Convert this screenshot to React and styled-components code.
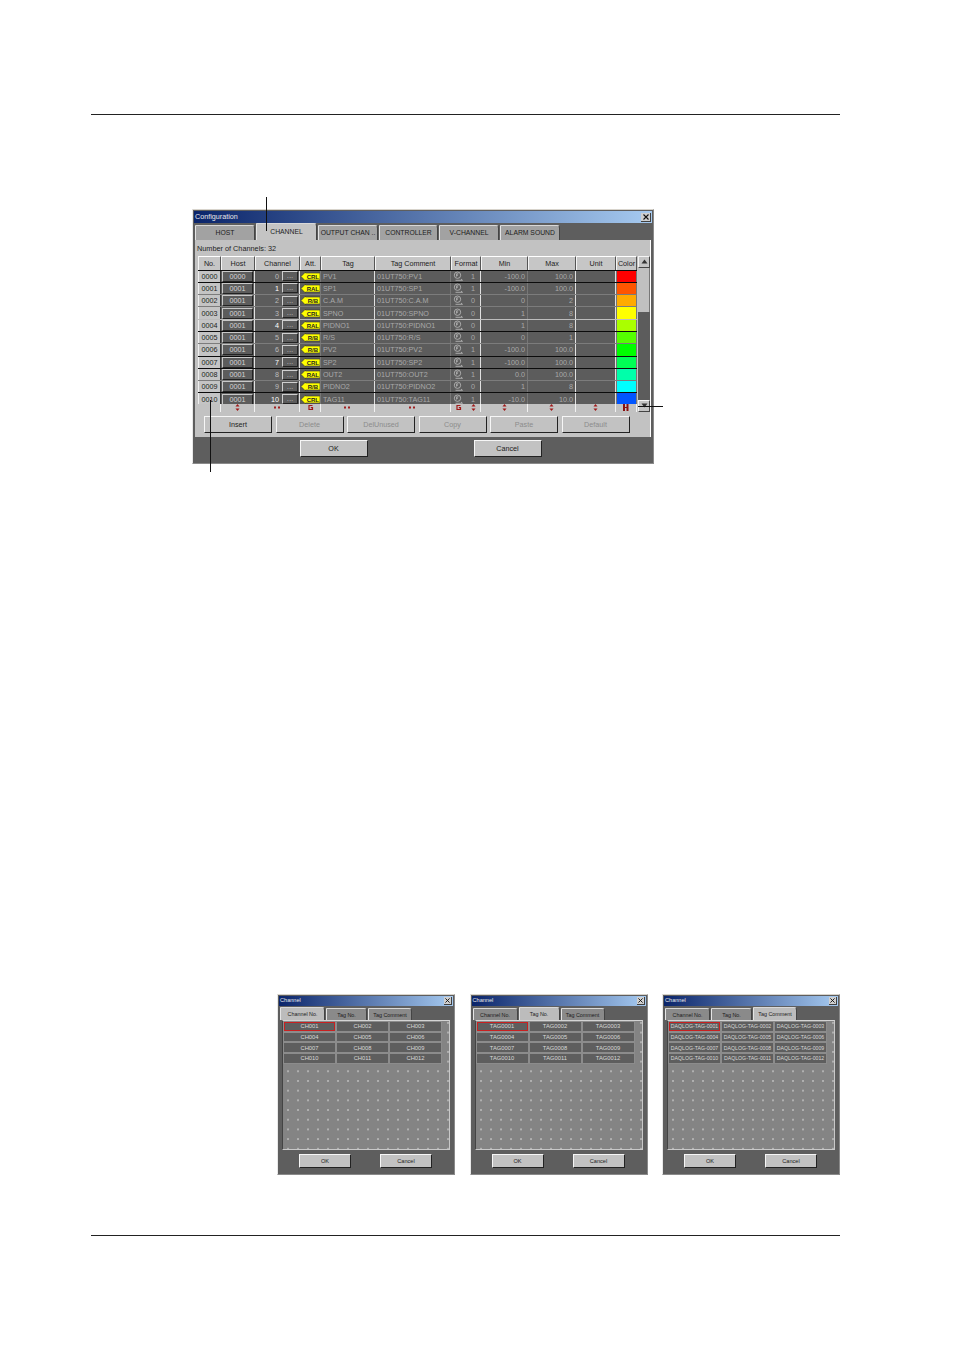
import styled, { createGlobalStyle } from 'styled-components'

const GlobalStyle = createGlobalStyle`
  html, body { margin: 0; padding: 0; background: #fff; }
  body { font-family: "Liberation Sans", Arial, sans-serif; }
`

const COLUMNS = '23px 34px 45px 21px 54px 76px 30px 47px 48px 40px 21px'

const Page = styled.div`
  position: relative;
  width: 954px;
  height: 1350px;
  padding-top: 114px;
  box-sizing: border-box;
  overflow: hidden;
`

const Rule = styled.div`
  width: 749px;
  height: 1px;
  margin-left: 91px;
  background: #222;
`

const FooterRule = styled(Rule)`
  margin-top: 60px;
`

const Callout = styled.div`
  position: absolute;
  left: ${({ $x }) => $x}px;
  top: ${({ $y }) => $y}px;
  width: ${({ $w }) => $w}px;
  height: ${({ $h }) => $h}px;
  background: #111;
  z-index: 5;
`

/* ── Window chrome ── */
const ConfigWindow = styled.div`
  width: 462px;
  height: 255px;
  margin: 94px 0 0 192px;
  box-sizing: border-box;
  padding: 1px;
  background: #5e5e5e;
  border: 1px solid;
  border-color: #d8d4cc #8a8a8a #8a8a8a #e8e8e8;
  display: flex;
  flex-direction: column;
`

const TitleBar = styled.div`
  flex: none;
  height: ${({ $small }) => ($small ? 10 : 12)}px;
  display: flex;
  align-items: center;
  justify-content: space-between;
  padding: 0 1px;
  background: linear-gradient(90deg, #0a246a, #a6caf0);
  color: #e8e8e8;
  font-size: ${({ $small }) => ($small ? 5.6 : 7.2)}px;
  line-height: 1;
`

const CloseBox = styled.span`
  width: ${({ $small }) => ($small ? 8 : 10)}px;
  height: ${({ $small }) => ($small ? 8 : 9)}px;
  display: flex;
  align-items: center;
  justify-content: center;
  background: #d0d0d0;
  border-right: 1px solid #404040;
  border-bottom: 1px solid #404040;
  box-sizing: border-box;

  svg { display: block; }
`

const TabRow = styled.div`
  flex: none;
  display: flex;
  align-items: flex-end;
  gap: 1px;
  height: ${({ $small }) => ($small ? 14 : 17)}px;
  padding-left: 1px;
`

const inactiveTab = ({ $small }) => ($small ? '#8a8a8a' : '#a2a2a2')
const activeTab = ({ $small }) => ($small ? '#bcbcbc' : '#c4c4c4')

const Tab = styled.div`
  width: ${({ $w }) => $w}px;
  height: ${({ $active, $small }) => ($small ? ($active ? 13 : 12) : ($active ? 17 : 15))}px;
  box-sizing: border-box;
  display: flex;
  align-items: center;
  justify-content: center;
  padding-bottom: ${({ $small }) => ($small ? 0 : 2)}px;
  background: ${(p) => (p.$active ? activeTab(p) : inactiveTab(p))};
  border-top: 1px solid #d8d8d8;
  border-left: 1px solid #e4e4e4;
  border-right: 1px solid #444;
  border-top-right-radius: 3px;
  color: #1c1c1c;
  font-size: ${({ $small }) => ($small ? 5.4 : 6.8)}px;
  white-space: nowrap;
`

const Panel = styled.div`
  flex: none;
  height: 197px;
  margin: 0 1px;
  padding: 4px 0 0 3px;
  box-sizing: border-box;
  background: #c2c2c2;
  border-right: 1px solid #fff;
`

const CountLabel = styled.div`
  height: 11.5px;
  margin-left: -1px;
  font-size: 7.3px;
  line-height: 10px;
  color: #222;
`

const GridRow = styled.div`
  display: flex;
`

const Table = styled.div`
  width: 439px;
`

const HeaderRow = styled.div`
  display: grid;
  grid-template-columns: ${COLUMNS};
  height: 14px;
`

const HeaderCell = styled.div`
  display: flex;
  align-items: center;
  justify-content: center;
  box-sizing: border-box;
  background: #c6c6c6;
  border-top: 1px solid #fff;
  border-left: 1px solid #f4f4f4;
  border-right: 1px solid #555;
  font-size: 7.2px;
  color: #1c1c1c;
`

const Body = styled.div`
  height: 134px;
  overflow: hidden;
`

const SEPARATORS = { dark: '#0c0c0c', mid: '#7c7c7c', light: '#bcbcbc' }

const Row = styled.div`
  display: grid;
  grid-template-columns: ${COLUMNS};
  height: 12.3px;
  box-sizing: border-box;
  background: #5c5c5c;
  border-top: 1px solid ${({ $sep }) => SEPARATORS[$sep]};
`

const Cell = styled.div`
  display: flex;
  align-items: center;
  justify-content: ${({ $align }) => $align || 'flex-start'};
  gap: 3px;
  min-width: 0;
  padding: 0 ${({ $pad }) => $pad ?? 2}px;
  box-sizing: border-box;
  border-right: 1px solid ${({ $strong }) => ($strong ? '#e0e0e0' : '#777')};
  font-size: 7.2px;
  color: #a9a9a9;
  white-space: nowrap;
  overflow: hidden;
`

const NumberCell = styled(Cell)`
  justify-content: center;
  background: #c4c4c4;
  color: #222;
  border-left: 1px solid #eee;
  border-right: 1px solid #333;
`

const HostButton = styled.div`
  flex: 1;
  height: 9px;
  display: flex;
  align-items: center;
  justify-content: center;
  border: 1px solid #c8c8c8;
  border-right-color: #222;
  border-bottom-color: #222;
  color: #d4d4d4;
  font-size: 7.2px;
`

const ChannelNumber = styled.span`
  color: ${({ $bright }) => ($bright ? '#fff' : '#bdbdbd')};
`

const MoreButton = styled.span`
  width: 16px;
  height: 10px;
  flex: none;
  display: flex;
  align-items: center;
  justify-content: center;
  border: 1px solid #cfcfcf;
  border-right-color: #222;
  border-bottom-color: #222;
  box-sizing: border-box;
  color: #b8b8b8;
  font-size: 8px;
  line-height: 8px;
`

const FormatValue = styled.span`
  margin-right: 3px;
`

const Swatch = styled.div`
  background: ${({ $color }) => $color};
  border-left: 1px solid #777;
  border-right: 1px solid #777;
`

const SortStrip = styled.div`
  display: grid;
  grid-template-columns: ${COLUMNS};
  height: 8px;
`

const SortCell = styled.div`
  display: flex;
  align-items: center;
  justify-content: ${({ $spread }) => ($spread ? 'space-around' : 'center')};
  background: #c2c2c2;
  border-right: 1px solid #f2f2f2;
  box-sizing: border-box;
`

const ScrollBar = styled.div`
  width: 12px;
  height: 156px;
  margin-left: 1px;
  display: flex;
  flex-direction: column;
  background: #5c5c5c;
`

const ScrollArrow = styled.div`
  height: 12px;
  flex: none;
  display: flex;
  align-items: center;
  justify-content: center;
  background: #c4c4c4;
  box-sizing: border-box;
  border: 1px solid;
  border-color: #f4f4f4 #444 #444 #f4f4f4;
`

const ScrollThumb = styled.div`
  height: 44px;
  flex: none;
  background: #c0c0c0;
  border-right: 1px solid #777;
  box-sizing: border-box;
`

const ScrollTrack = styled.div`
  flex: 1;
`

const ActionRow = styled.div`
  display: flex;
  gap: 3.5px;
  margin: 4px 0 0 6px;
`

const Button = styled.div`
  width: ${({ $w }) => $w}px;
  height: ${({ $h }) => $h}px;
  display: flex;
  align-items: center;
  justify-content: center;
  box-sizing: border-box;
  background: #c2c2c2;
  border: 1px solid;
  border-color: #f6f6f6 #222 #222 #f6f6f6;
  color: ${({ $disabled }) => ($disabled ? '#8c8c8c' : '#1c1c1c')};
  font-size: ${({ $small }) => ($small ? 5.6 : 7.2)}px;
`

const FooterButtons = styled.div`
  flex: 1;
  display: flex;
  align-items: center;
  gap: 106px;
  padding: 0 0 3px 105.5px;
`

/* ── Channel dialogs ── */
const DialogRow = styled.div`
  display: flex;
  gap: 14.5px;
  margin: 530px 0 0 277px;
`

const Dialog = styled.div`
  width: 178px;
  height: 181px;
  box-sizing: border-box;
  padding: 1px;
  display: flex;
  flex-direction: column;
  background: #5e5e5e;
  border: 1px solid;
  border-color: #d8d4cc #8a8a8a #8a8a8a #e8e8e8;
`

const DialogPanel = styled.div`
  flex: none;
  height: 130px;
  margin: 0 3px;
  box-sizing: border-box;
  border: 1px solid;
  border-color: #d4d4d4 #c8c8c8 #c8c8c8 #444;
  background-color: #848484;
  background-image: radial-gradient(circle, #c0c0c0 0.6px, transparent 0.95px);
  background-size: 10px 9.7px;
  background-position: 0 -3px;
`

const ChannelGrid = styled.div`
  width: 159px;
  display: grid;
  grid-template-columns: repeat(3, 1fr);
  grid-auto-rows: 10.7px;
  background: #5e5e5e;
`

const ChannelCell = styled.div`
  position: relative;
  display: flex;
  align-items: center;
  justify-content: center;
  box-sizing: border-box;
  border: 1px solid #8c8c8c;
  color: #d8d8d8;
  font-size: ${({ $tight }) => ($tight ? 5.2 : 5.8)}px;
  white-space: nowrap;
  overflow: hidden;

  ${({ $selected }) => $selected && `
    &::after {
      content: '';
      position: absolute;
      inset: 0;
      border: 1px solid #c82020;
    }
  `}
`

const DialogButtons = styled.div`
  flex: 1;
  display: flex;
  align-items: center;
  gap: 29px;
  padding: 0 0 2px 20px;
`

/* ── Small drawings ── */
const AttTag = ({ label }) => (
  <svg width="19" height="9" viewBox="0 0 19 9">
    <polygon points="0,4.5 4.5,0 4.5,1 19,1 19,8 4.5,8 4.5,9" fill="#ffff00" stroke="#333" strokeWidth="0.6" />
    <text x="11.8" y="7" textAnchor="middle" fontSize="6" fontWeight="700" fill="#222"
      fontFamily="Liberation Sans, sans-serif">{label}</text>
  </svg>
)

const FormatIcon = () => (
  <svg width="11" height="11" viewBox="0 0 11 11" fill="none" stroke="#bcbcbc" strokeWidth="0.8">
    <circle cx="4.5" cy="4.2" r="3.2" />
    <path d="M3.6 2.8v2.8M3.6 2.8h1.8M3.6 4.2h1.4" />
    <path d="M2.5 9.3h7M8 8l1.5 1.3" />
  </svg>
)

const SortGlyph = ({ kind }) => {
  if (kind === 'wide') {
    return (
      <svg width="7" height="5" viewBox="0 0 7 5" fill="#a02020">
        <rect x="0" y="1.5" width="2" height="2" />
        <rect x="4" y="1.5" width="2" height="2" />
      </svg>
    )
  }
  if (kind === 'badge') {
    return (
      <svg width="7" height="7" viewBox="0 0 7 7" fill="none" stroke="#a01818" strokeWidth="1.2">
        <path d="M5.5 1.5H2v4h3.5V3.6H3.8" />
      </svg>
    )
  }
  if (kind === 'bars') {
    return (
      <svg width="6" height="7" viewBox="0 0 6 7" fill="#8a0f0f">
        <rect x="0" y="0" width="2" height="7" />
        <rect x="3.5" y="0" width="2" height="7" />
        <rect x="0" y="3" width="5" height="1" />
      </svg>
    )
  }
  return (
    <svg width="5" height="7" viewBox="0 0 5 7" fill="#a01818">
      <polygon points="2.5,0 4.5,2.5 0.5,2.5" />
      <polygon points="2.5,7 4.5,4.5 0.5,4.5" />
    </svg>
  )
}

const CloseIcon = ({ size = 6 }) => (
  <svg width={size} height={size} viewBox="0 0 6 6" stroke="#111" strokeWidth="1.1">
    <path d="M0.5 0.5l5 5M5.5 0.5l-5 5" />
  </svg>
)

const Triangle = ({ down }) => (
  <svg width="7" height="5" viewBox="0 0 7 5" fill="#333">
    <polygon points={down ? '0.5,0.5 6.5,0.5 3.5,4.5' : '3.5,0.5 6.5,4.5 0.5,4.5'} />
  </svg>
)

/* ── Data ── */
const CONFIG_TABS = [
  { label: 'HOST', w: 60 },
  { label: 'CHANNEL', w: 61, active: true },
  { label: 'OUTPUT CHAN ..', w: 60 },
  { label: 'CONTROLLER', w: 59 },
  { label: 'V-CHANNEL', w: 60 },
  { label: 'ALARM SOUND', w: 60 },
]

const HEADERS = ['No.', 'Host', 'Channel', 'Att.', 'Tag', 'Tag Comment', 'Format', 'Min', 'Max', 'Unit', 'Color']

const ROWS = [
  { tag: 'PV1', att: 'CRL', fmt: 1, min: '-100.0', max: '100.0', color: '#ff0000', sep: 'dark' },
  { tag: 'SP1', att: 'RAL', fmt: 1, min: '-100.0', max: '100.0', color: '#ff5500', sep: 'dark' },
  { tag: 'C.A.M', att: 'R/B', fmt: 0, min: '0', max: '2', color: '#ffaa00', sep: 'mid' },
  { tag: 'SPNO', att: 'CRL', fmt: 0, min: '1', max: '8', color: '#ffff00', sep: 'mid' },
  { tag: 'PIDNO1', att: 'RAL', fmt: 0, min: '1', max: '8', color: '#aaff00', sep: 'light' },
  { tag: 'R/S', att: 'R/B', fmt: 0, min: '0', max: '1', color: '#55ff00', sep: 'dark' },
  { tag: 'PV2', att: 'R/B', fmt: 1, min: '-100.0', max: '100.0', color: '#00ff00', sep: 'mid' },
  { tag: 'SP2', att: 'CRL', fmt: 1, min: '-100.0', max: '100.0', color: '#00ff55', sep: 'dark' },
  { tag: 'OUT2', att: 'RAL', fmt: 1, min: '0.0', max: '100.0', color: '#00ffaa', sep: 'dark' },
  { tag: 'PIDNO2', att: 'R/B', fmt: 0, min: '1', max: '8', color: '#00ffff', sep: 'mid' },
  { tag: 'TAG11', att: 'CRL', fmt: 1, min: '-10.0', max: '10.0', color: '#0055ff', sep: 'dark' },
]

const ACTIONS = [
  { label: 'Insert' },
  { label: 'Delete', disabled: true },
  { label: 'DelUnused', disabled: true },
  { label: 'Copy', disabled: true },
  { label: 'Paste', disabled: true },
  { label: 'Default', disabled: true },
]

const SORT_GLYPHS = [[], ['arrow'], ['wide'], ['badge'], ['wide'], ['wide'], ['badge', 'arrow'], ['arrow'], ['arrow'], ['arrow'], ['bars']]

const DIALOG_TABS = [
  { label: 'Channel No.', w: 45 },
  { label: 'Tag No.', w: 41 },
  { label: 'Tag Comment', w: 44 },
]

const pad = (n, size) => String(n).padStart(size, '0')
const numbers = Array.from({ length: 12 }, (_, i) => i + 1)

const DIALOGS = [
  { active: 0, cells: numbers.map((n) => `CH${pad(n, 3)}`) },
  { active: 1, cells: numbers.map((n) => `TAG${pad(n, 4)}`) },
  { active: 2, tight: true, cells: numbers.map((n) => `DAQLOG-TAG-${pad(n, 4)}`) },
]

function ChannelDialog({ active, cells, tight }) {
  return (
    <Dialog>
      <TitleBar $small>
        Channel
        <CloseBox $small><CloseIcon size={5} /></CloseBox>
      </TitleBar>
      <TabRow $small>
        {DIALOG_TABS.map((tab, i) => (
          <Tab key={tab.label} $small $w={tab.w} $active={i === active}>{tab.label}</Tab>
        ))}
      </TabRow>
      <DialogPanel>
        <ChannelGrid>
          {cells.map((text, i) => (
            <ChannelCell key={text} $selected={i === 0} $tight={tight}>{text}</ChannelCell>
          ))}
        </ChannelGrid>
      </DialogPanel>
      <DialogButtons>
        <Button $small $w={52} $h={14}>OK</Button>
        <Button $small $w={52} $h={14}>Cancel</Button>
      </DialogButtons>
    </Dialog>
  )
}

export default function App() {
  return (
    <Page>
      <GlobalStyle />
      <Rule />

      <ConfigWindow>
        <TitleBar>
          Configuration
          <CloseBox><CloseIcon /></CloseBox>
        </TitleBar>
        <TabRow>
          {CONFIG_TABS.map((tab) => (
            <Tab key={tab.label} $w={tab.w} $active={tab.active}>{tab.label}</Tab>
          ))}
        </TabRow>
        <Panel>
          <CountLabel>Number of Channels: 32</CountLabel>
          <GridRow>
            <Table>
              <HeaderRow>
                {HEADERS.map((h) => <HeaderCell key={h}>{h}</HeaderCell>)}
              </HeaderRow>
              <Body>
                {ROWS.map((row, i) => (
                  <Row key={row.tag} $sep={row.sep}>
                    <NumberCell>{pad(i, 4)}</NumberCell>
                    <Cell $pad={1} $strong>
                      <HostButton>{i === 0 ? '0000' : '0001'}</HostButton>
                    </Cell>
                    <Cell $align="flex-end" $pad={1} $strong>
                      <ChannelNumber $bright={i % 3 === 1}>{i}</ChannelNumber>
                      <MoreButton>...</MoreButton>
                    </Cell>
                    <Cell $align="center" $pad={0}><AttTag label={row.att} /></Cell>
                    <Cell $strong>{row.tag}</Cell>
                    <Cell>01UT750:{row.tag}</Cell>
                    <Cell $align="space-between" $strong>
                      <FormatIcon />
                      <FormatValue>{row.fmt}</FormatValue>
                    </Cell>
                    <Cell $align="flex-end">{row.min}</Cell>
                    <Cell $align="flex-end" $strong>{row.max}</Cell>
                    <Cell $strong />
                    <Swatch $color={row.color} />
                  </Row>
                ))}
              </Body>
              <SortStrip>
                {SORT_GLYPHS.map((glyphs, i) => (
                  <SortCell key={HEADERS[i]} $spread={glyphs.length > 1}>
                    {glyphs.map((kind, j) => <SortGlyph key={j} kind={kind} />)}
                  </SortCell>
                ))}
              </SortStrip>
            </Table>
            <ScrollBar>
              <ScrollArrow><Triangle /></ScrollArrow>
              <ScrollThumb />
              <ScrollTrack />
              <ScrollArrow><Triangle down /></ScrollArrow>
            </ScrollBar>
          </GridRow>
          <ActionRow>
            {ACTIONS.map((a) => (
              <Button key={a.label} $w={68} $h={17} $disabled={a.disabled}>{a.label}</Button>
            ))}
          </ActionRow>
        </Panel>
        <FooterButtons>
          <Button $w={68} $h={17}>OK</Button>
          <Button $w={68} $h={17}>Cancel</Button>
        </FooterButtons>
      </ConfigWindow>

      <DialogRow>
        {DIALOGS.map((d) => <ChannelDialog key={d.active} {...d} />)}
      </DialogRow>

      <FooterRule />

      <Callout $x={266} $y={197} $w={1} $h={34} />
      <Callout $x={210} $y={400} $w={1} $h={72} />
      <Callout $x={638} $y={406} $w={25} $h={1} />
    </Page>
  )
}
